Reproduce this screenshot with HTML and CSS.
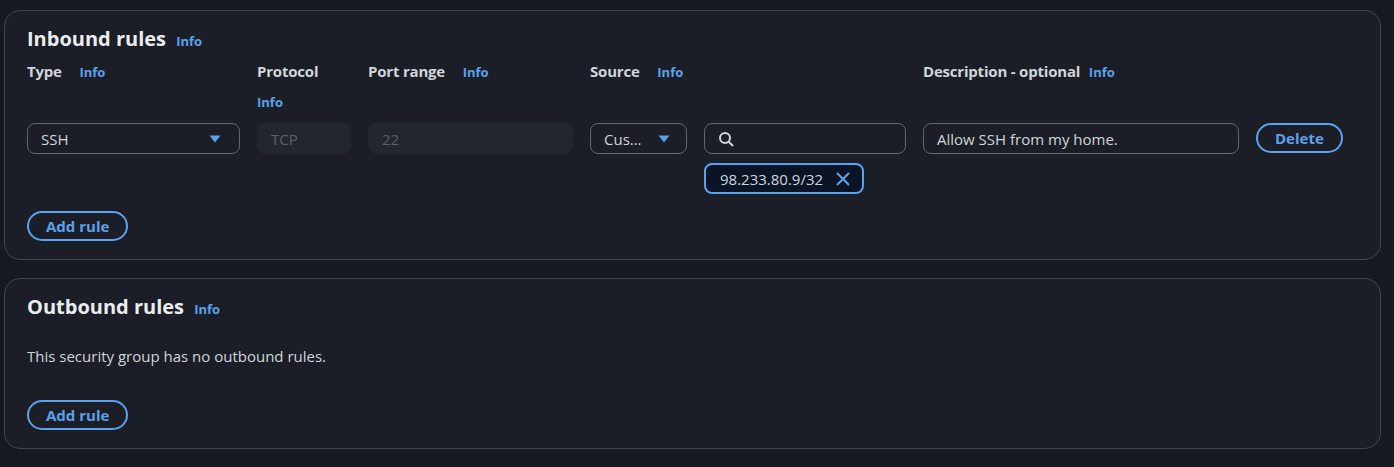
FILE: index.html
```html
<!DOCTYPE html>
<html lang="en">
<head>
<meta charset="utf-8">
<title>Security group rules</title>
<link rel="stylesheet" href="styles.css">
</head>
<body>
<main class="page">
  <section class="panel">
    <h2 class="panel-title">Inbound rules <a class="info info-title">Info</a></h2>
    <div class="rule-grid">
      <div class="label">Type <a class="info">Info</a></div>
      <div class="label">Protocol <a class="info info-wrap">Info</a></div>
      <div class="label">Port range <a class="info">Info</a></div>
      <div class="label">Source <a class="info">Info</a></div>
      <div class="label"></div>
      <div class="label">Description - optional <a class="info info-tight">Info</a></div>
      <div class="label"></div>

      <div class="field select">
        <span class="value">SSH</span>
        <svg class="caret" width="12" height="8" viewBox="0 0 12 8"><path d="M0.5 0.5h11L6 7.5z" fill="currentColor"/></svg>
      </div>
      <div class="field disabled">TCP</div>
      <div class="field disabled">22</div>
      <div class="field select select-narrow">
        <span class="value">Cus…</span>
        <svg class="caret" width="12" height="8" viewBox="0 0 12 8"><path d="M0.5 0.5h11L6 7.5z" fill="currentColor"/></svg>
      </div>
      <div class="source-col">
        <div class="field search">
          <svg class="search-icon" width="16" height="16" viewBox="0 0 16 16" fill="none" stroke="currentColor" stroke-width="2"><circle cx="7" cy="7" r="5"/><path d="M10.6 10.6L14.5 14.5" stroke-linecap="round"/></svg>
        </div>
        <div class="token">
          <span>98.233.80.9/32</span>
          <svg class="token-x" width="16" height="16" viewBox="0 0 16 16" fill="none" stroke="currentColor" stroke-width="2"><path d="M2 2L14 14M14 2L2 14"/></svg>
        </div>
      </div>
      <div class="field">Allow SSH from my home.</div>
      <div class="cell-btn"><button class="btn">Delete</button></div>
    </div>
    <button class="btn btn-add">Add rule</button>
  </section>

  <section class="panel">
    <h2 class="panel-title">Outbound rules <a class="info info-title">Info</a></h2>
    <p class="empty">This security group has no outbound rules.</p>
    <button class="btn btn-add btn-add-out">Add rule</button>
  </section>

  <section class="panel panel-next"></section>
</main>
</body>
</html>
```

FILE: styles.css
```css
* { box-sizing: border-box; }

html, body {
  margin: 0;
  padding: 0;
  background: #161920;
  height: 467px;
  overflow: hidden;
}

body {
  font-family: "Open Sans", "Noto Sans", sans-serif;
  color: #d1d5db;
  font-size: 15px;
}

.page {
  padding: 10px 13px 0 4px;
  display: flex;
  flex-direction: column;
  gap: 18px;
}

.panel {
  background: #1b1e26;
  border: 1px solid #40444d;
  border-radius: 16px;
  padding: 16px 23px 18px 22px;
}

.panel-next {
  margin: 0 -3px 0 -4px;
  height: 10px;
  padding: 0;
}

.panel-title {
  margin: 0;
  font-size: 20px;
  line-height: 24px;
  font-weight: 700;
  color: #eaedf0;
}

.info {
  color: #5aa2ec;
  font-weight: 700;
  font-size: 13px;
  margin-left: 14px;
  letter-spacing: 0;
}

.info-title {
  margin-left: 5px;
}

.info-tight {
  margin-left: 5px;
}

.rule-grid {
  display: grid;
  grid-template-columns: 213px 94px 205px 97px 202px 316px auto;
  column-gap: 17px;
  margin-top: 8px;
  align-items: start;
}

.label {
  font-weight: 700;
  font-size: 15px;
  line-height: 20px;
  color: #d1d5db;
  height: 62px;
  letter-spacing: -0.2px;
  white-space: nowrap;
}

.info-wrap {
  display: block;
  margin: 11px 0 0 0;
}

.field {
  height: 31px;
  border: 1px solid #62666f;
  border-radius: 8px;
  padding: 0 13px;
  display: flex;
  align-items: center;
  font-size: 15px;
  color: #d1d5db;
  white-space: nowrap;
}

.select {
  justify-content: space-between;
  padding-right: 18px;
}

.select-narrow {
  padding-right: 16px;
}

.value { display: block; }

.caret { color: #5aa2ec; flex: none; }

.disabled {
  background: #22262e;
  border-color: #22262e;
  color: #5d616b;
}

.source-col {
  display: flex;
  flex-direction: column;
  align-items: flex-start;
  gap: 9px;
}

.source-col .search { width: 100%; }

.search-icon { color: #d1d5db; }

.token {
  height: 31px;
  border: 2px solid #5aa2ec;
  border-radius: 8px;
  background: #0b1424;
  display: flex;
  align-items: center;
  gap: 12px;
  padding: 0 11px 0 14px;
  color: #d1d5db;
  font-size: 15px;
}

.token-x { color: #5aa2ec; }

.btn {
  font-family: inherit;
  font-weight: 700;
  font-size: 15px;
  color: #5aa2ec;
  background: transparent;
  border: 2px solid #5aa2ec;
  border-radius: 20px;
  height: 30px;
  padding: 0 17px;
  cursor: pointer;
  line-height: 1;
}

.btn-add {
  margin-top: 17px;
  display: block;
}

.empty {
  margin: 25px 0 0;
  font-size: 15px;
  line-height: 20px;
  color: #d1d5db;
}

.btn-add-out {
  margin-top: 34px;
}
```
